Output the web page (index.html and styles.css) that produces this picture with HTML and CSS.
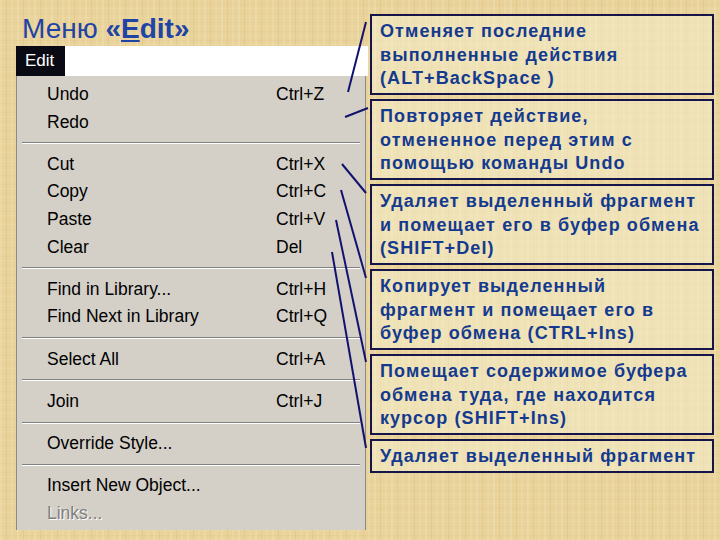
FILE: index.html
```html
<!DOCTYPE html>
<html lang="ru">
  <head>
    <meta charset="UTF-8" />
    <meta name="viewport" content="width=device-width, initial-scale=1.0" />
    <title>Меню Edit</title>
    <link rel="stylesheet" href="styles.css">
  </head>
  <body>
    <section class="slide">
      <div class="left">
        <h1 class="title">Меню <b>«<u>E</u>dit»</b></h1>
        <div class="menubar"><span class="menubar-item">Edit</span></div>
        <ul class="menu">
          <li class="item"><span>Undo</span><span>Ctrl+Z</span></li>
          <li class="item"><span>Redo</span><span></span></li>
          <li class="sep"></li>
          <li class="item"><span>Cut</span><span>Ctrl+X</span></li>
          <li class="item"><span>Copy</span><span>Ctrl+C</span></li>
          <li class="item"><span>Paste</span><span>Ctrl+V</span></li>
          <li class="item"><span>Clear</span><span>Del</span></li>
          <li class="sep"></li>
          <li class="item"><span>Find in Library...</span><span>Ctrl+H</span></li>
          <li class="item"><span>Find Next in Library</span><span>Ctrl+Q</span></li>
          <li class="sep"></li>
          <li class="item"><span>Select All</span><span>Ctrl+A</span></li>
          <li class="sep"></li>
          <li class="item"><span>Join</span><span>Ctrl+J</span></li>
          <li class="sep"></li>
          <li class="item"><span>Override Style...</span><span></span></li>
          <li class="sep"></li>
          <li class="item"><span>Insert New Object...</span><span></span></li>
          <li class="item disabled"><span>Links...</span><span></span></li>
        </ul>
      </div>

      <div class="notes">
        <p class="note">Отменяет последние<br>выполненные действия<br>(ALT+BackSpace )</p>
        <p class="note">Повторяет действие,<br>отмененное перед этим с<br>помощью команды Undo</p>
        <p class="note">Удаляет выделенный фрагмент<br>и помещает его в буфер обмена<br>(SHIFT+Del)</p>
        <p class="note">Копирует выделенный<br>фрагмент и помещает его в<br>буфер обмена (CTRL+Ins)</p>
        <p class="note">Помещает содержимое буфера<br>обмена туда, где находится<br>курсор (SHIFT+Ins)</p>
        <p class="note short">Удаляет выделенный фрагмент</p>
      </div>

      <!-- линии от пунктов меню к пояснениям -->
      <svg class="links" viewBox="0 0 720 540">
        <line x1="348" y1="92" x2="366" y2="22" />
        <line x1="345" y1="117" x2="368" y2="108" />
        <line x1="342" y1="164" x2="366" y2="193" />
        <line x1="341" y1="190" x2="366" y2="278" />
        <line x1="336" y1="220" x2="366" y2="362" />
        <line x1="332" y1="252" x2="366" y2="448" />
      </svg>
    </section>
  </body>
</html>
```

FILE: styles.css
```css
@charset 'utf-8';
* {
  margin: 0;
  padding: 0;
  box-sizing: border-box;
}

body {
  width: 720px;
  height: 540px;
  overflow: hidden;
}

.slide {
  position: relative;
  display: flex;
  width: 720px;
  height: 540px;
  background-color: #e9d39a;
  background-image:
    repeating-linear-gradient(90deg, rgba(255, 255, 255, 0.14) 0 2px, transparent 2px 6px, rgba(160, 115, 40, 0.09) 6px 7px, transparent 7px 11px, rgba(255, 250, 220, 0.1) 11px 13px, transparent 13px 17px),
    repeating-linear-gradient(0deg, rgba(255, 255, 255, 0.07) 0 1px, transparent 1px 4px, rgba(170, 120, 40, 0.05) 4px 5px, transparent 5px 9px);
}

.left {
  width: 368px;
  padding-left: 16px;
}

.title {
  margin: 13px 0 2px 6px;
  font-family: "Liberation Sans", Arial, sans-serif;
  font-size: 28px;
  font-weight: normal;
  line-height: 31px;
  color: #2143a6;
}
.title u {
  text-decoration-thickness: 2px;
  text-underline-offset: 2px;
}

.menubar {
  height: 30px;
  background: #fff;
  display: flex;
  align-items: center;
}
.menubar-item {
  display: flex;
  align-items: center;
  height: 30px;
  width: 49px;
  padding-left: 9px;
  background: #0a0a14;
  color: #fff;
  font-family: "Liberation Sans", Tahoma, sans-serif;
  font-size: 17px;
}

.menu {
  list-style: none;
  width: 350px;
  height: 454px;
  padding-top: 5px;
  background: #d4d0c8;
  border-left: 1px solid #8a8a8a;
  border-right: 1px solid #8a8a8a;
  font-family: "Liberation Sans", Tahoma, sans-serif;
  font-size: 17.5px;
  color: #000;
}
.item {
  display: grid;
  grid-template-columns: 229px 1fr;
  height: 27.6px;
  line-height: 27.6px;
  padding-left: 30px;
}
.item.disabled {
  color: #808080;
  text-shadow: 1px 1px 0 #fff;
}
.sep {
  height: 14.6px;
  margin: 0 5px;
  display: flex;
  flex-direction: column;
  justify-content: center;
}
.sep::before {
  content: "";
  height: 1px;
  background: #808080;
  border-bottom: 1px solid #fff;
  box-sizing: content-box;
}

.notes {
  width: 344px;
  margin-left: 2px;
  padding-top: 14px;
  display: flex;
  flex-direction: column;
  gap: 4.5px;
}
.note {
  height: 80.5px;
  padding: 4px 2px 2px 8px;
  border: 2.5px solid #15154a;
  background: rgba(244, 238, 206, 0.55);
  font-family: "Liberation Sans", Arial, sans-serif;
  font-size: 18px;
  font-weight: bold;
  letter-spacing: 1.1px;
  line-height: 23.5px;
  white-space: nowrap;
  color: #143a8f;
}
.note.short {
  height: 34px;
}

.links {
  position: absolute;
  top: 0;
  left: 0;
  width: 720px;
  height: 540px;
  pointer-events: none;
}
.links line {
  stroke: #12126e;
  stroke-width: 2;
}
```
